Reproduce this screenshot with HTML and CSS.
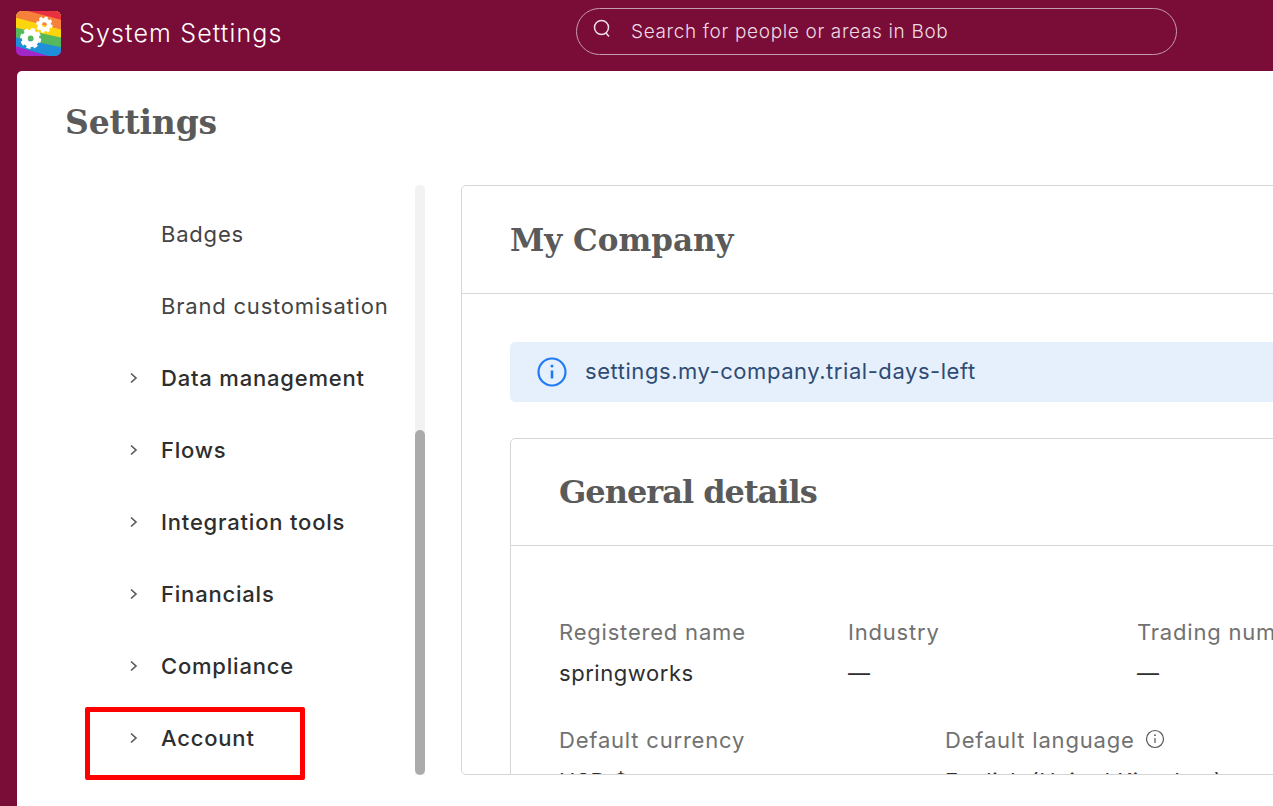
FILE: index.html
```html
<!DOCTYPE html>
<html lang="en">
<head>
    <meta charset="UTF-8">
    <title>System Settings</title>
    <link rel="stylesheet" href="styles.css">
</head>
<body>
    <header class="topbar">
        <div class="brand">
            <svg class="logo" width="45" height="45" viewBox="0 0 46 46">
                <defs>
                    <clipPath id="logoClip"><rect width="46" height="46" rx="6"/></clipPath>
                </defs>
                <g clip-path="url(#logoClip)">
                    <rect width="46" height="46" fill="#a326c9"/>
                    <polygon points="0,0 46,0 46,50 0,36" fill="#1e8fd8"/>
                    <polygon points="0,0 46,0 46,37 0,27" fill="#55b85c"/>
                    <polygon points="0,0 46,0 46,27 0,17" fill="#fdd50c"/>
                    <polygon points="0,0 46,0 46,19 0,7" fill="#f5813a"/>
                    <polygon points="12,0 46,0 46,9" fill="#e8303f"/>
                    <g fill="none" stroke="#fff">
                        <circle cx="15" cy="28" r="6" stroke-width="6"/>
                        <circle cx="15" cy="28" r="9" stroke-width="3.5" stroke-dasharray="4.1 2.97"/>
                        <circle cx="29" cy="14" r="4.7" stroke-width="4.400"/>
                        <circle cx="29" cy="14" r="7" stroke-width="2.800" stroke-dasharray="3.100 2.400"/>
                    </g>
                </g>
            </svg>
            <span class="app-name">System Settings</span>
        </div>
        <div class="search">
            <svg width="20" height="20" viewBox="0 0 20 20" fill="none" stroke="#f1dfe7" stroke-width="1.5">
                <circle cx="9.5" cy="8.5" r="7"/>
                <path d="M14 14l3 3.500"/>
            </svg>
            <span>Search for people or areas in Bob</span>
        </div>
    </header>

    <div class="panel">
        <h1 class="page-title">Settings</h1>
        <div class="columns">
            <div class="side">
                <ul class="nav">
                    <li class="nav-item sub">Badges</li>
                    <li class="nav-item sub">Brand customisation</li>
                    <li class="nav-item"><svg class="chev" width="10" height="12" viewBox="0 0 10 12"><path d="M2 1.500l5 4.500-5 4.500"/></svg>Data management</li>
                    <li class="nav-item"><svg class="chev" width="10" height="12" viewBox="0 0 10 12"><path d="M2 1.500l5 4.500-5 4.500"/></svg>Flows</li>
                    <li class="nav-item"><svg class="chev" width="10" height="12" viewBox="0 0 10 12"><path d="M2 1.500l5 4.500-5 4.500"/></svg>Integration tools</li>
                    <li class="nav-item"><svg class="chev" width="10" height="12" viewBox="0 0 10 12"><path d="M2 1.500l5 4.500-5 4.500"/></svg>Financials</li>
                    <li class="nav-item"><svg class="chev" width="10" height="12" viewBox="0 0 10 12"><path d="M2 1.500l5 4.500-5 4.500"/></svg>Compliance</li>
                    <li class="nav-item"><svg class="chev" width="10" height="12" viewBox="0 0 10 12"><path d="M2 1.500l5 4.500-5 4.500"/></svg>Account</li>
                </ul>
                <div class="track"><div class="thumb"></div></div>
            </div>

            <main class="company">
                <h2 class="company-title">My Company</h2>
                <div class="company-body">
                    <div class="notice">
                        <svg width="30" height="30" viewBox="0 0 30 30" fill="none" stroke="#1f7bf2" stroke-width="2.200">
                            <circle cx="15" cy="15" r="13.500"/>
                            <path d="M15 13.500v8" stroke-width="2.600"/>
                            <circle cx="15" cy="9" r="1.500" fill="#1f7bf2" stroke="none"/>
                        </svg>
                        <span>settings.my-company.trial-days-left</span>
                    </div>
                    <section class="details">
                        <h3 class="details-title">General details</h3>
                        <div class="details-body">
                            <div class="row row-three">
                                <div class="field"><div class="label">Registered name</div><div class="value">springworks</div></div>
                                <div class="field"><div class="label">Industry</div><div class="value">—</div></div>
                                <div class="field"><div class="label">Trading number</div><div class="value">—</div></div>
                            </div>
                            <div class="row row-two">
                                <div class="field"><div class="label">Default currency</div><div class="value">USD $</div></div>
                                <div class="field">
                                    <div class="label label-hint">Default language
                                        <svg class="hint" width="20" height="20" viewBox="0 0 20 20" fill="none" stroke="#555" stroke-width="1.200">
                                            <circle cx="10" cy="10" r="8.500"/>
                                            <path d="M10 9v5"/>
                                            <circle cx="10" cy="6.200" r="0.900" fill="#555" stroke="none"/>
                                        </svg>
                                    </div>
                                    <div class="value">English (United Kingdom)</div>
                                </div>
                            </div>
                        </div>
                    </section>
                </div>
            </main>
        </div>
    </div>

    <div class="highlight"></div>
</body>
</html>
```

FILE: styles.css
```css
* {
    box-sizing: border-box;
}

html, body {
    height: 100%;
}

body {
    margin: 0;
    height: 806px;
    overflow: hidden;
    background-color: #7a0c38;
    font-family: Inter, "Open Sans", sans-serif;
    display: flex;
    flex-direction: column;
}

.topbar {
    height: 71px;
    flex: none;
    display: flex;
    align-items: center;
    padding-left: 16px;
}

.brand {
    display: flex;
    align-items: center;
    width: 560px;
    margin-top: -4px;
}

.logo {
    display: block;
}

.app-name {
    margin-left: 18px;
    font-size: 25px;
    font-weight: 300;
    letter-spacing: 1.15px;
    color: #fff;
    margin-top: -2px;
}

.search {
    width: 601px;
    height: 47px;
    margin-top: -9px;
    border: 1px solid #c79bae;
    border-radius: 24px;
    display: flex;
    align-items: center;
    padding: 0 0 0 15px;
    color: #eddbe3;
    font-size: 19px;
    font-weight: 300;
    letter-spacing: 0.65px;
}

.search svg {
    margin-right: 19px;
    margin-top: -5px;
}

.panel {
    flex: 1;
    margin-left: 17px;
    background-color: #fff;
    border-top-left-radius: 5px;
    overflow: hidden;
    padding-left: 49px;
}

.page-title {
    margin: 0 0 0 -1px;
    height: 114px;
    padding-top: 28px;
    font-family: "DejaVu Serif", serif;
    font-size: 33px;
    line-height: 48px;
    font-weight: 700;
    letter-spacing: -0.2px;
    color: #5a5a5a;
}

.columns {
    display: flex;
    height: 590px;
}

.side {
    width: 359px;
    flex: none;
    display: flex;
    justify-content: space-between;
    overflow: hidden;
}

.nav {
    list-style: none;
    margin: 0;
    padding: 13px 0 0;
}

.nav-item {
    height: 72px;
    display: flex;
    align-items: center;
    padding-left: 95px;
    font-size: 22px;
    font-weight: 500;
    letter-spacing: 0.8px;
    color: #2e2e2e;
    white-space: nowrap;
}

.nav-item.sub {
    font-weight: 400;
    color: #444;
}

.chev {
    margin-left: -32px;
    margin-right: 22px;
    fill: none;
    stroke: #555;
    stroke-width: 1.6;
}

.track {
    width: 10px;
    flex: none;
    background-color: #f2f2f2;
    border-radius: 5px 5px 0 0;
    display: flex;
    align-items: flex-end;
}

.thumb {
    width: 10px;
    height: 345px;
    background-color: #ababab;
    border-radius: 5px;
}

.company {
    width: 900px;
    flex: none;
    margin-left: 36px;
    border: 1px solid #d6d6d6;
    border-radius: 5px;
    overflow: hidden;
}

.company-title {
    margin: 0;
    height: 108px;
    display: flex;
    align-items: center;
    padding-left: 48px;
    border-bottom: 1px solid #d6d6d6;
    font-family: "DejaVu Serif", serif;
    font-size: 31px;
    font-weight: 700;
    color: #5a5a5a;
}

.company-body {
    padding: 48px 0 0 48px;
}

.notice {
    height: 60px;
    display: flex;
    align-items: center;
    padding-left: 27px;
    background-color: #e6f0fc;
    border-radius: 5px;
    color: #2f4b73;
    font-size: 22px;
    letter-spacing: 0.55px;
}

.notice span {
    margin-left: 18px;
    margin-top: -2px;
}

.details {
    margin-top: 36px;
    border: 1px solid #d6d6d6;
    border-radius: 5px;
}

.details-title {
    margin: 0;
    height: 107px;
    display: flex;
    align-items: center;
    padding-left: 48px;
    border-bottom: 1px solid #d6d6d6;
    font-family: "DejaVu Serif", serif;
    font-size: 32px;
    font-weight: 700;
    letter-spacing: -1px;
    color: #5a5a5a;
}

.details-body {
    padding: 72px 0 0 48px;
}

.row {
    display: grid;
    margin-bottom: 38px;
}

.row-three {
    grid-template-columns: 289px 289px 289px;
}

.row-two {
    grid-template-columns: 386px 386px;
}

.label {
    height: 29px;
    line-height: 29px;
    font-size: 22px;
    font-weight: 400;
    letter-spacing: 0.8px;
    color: #717171;
    white-space: nowrap;
}

.label-hint {
    display: flex;
    align-items: center;
}

.hint {
    margin-left: 10px;
    margin-top: -4px;
}

.value {
    margin-top: 12px;
    height: 29px;
    line-height: 29px;
    font-size: 22px;
    letter-spacing: 0.55px;
    color: #2e2e2e;
    white-space: nowrap;
}

.highlight {
    position: absolute;
    left: 85px;
    top: 707px;
    width: 220px;
    height: 73px;
    border: 5px solid #fe0000;
    border-radius: 2px;
}
```
